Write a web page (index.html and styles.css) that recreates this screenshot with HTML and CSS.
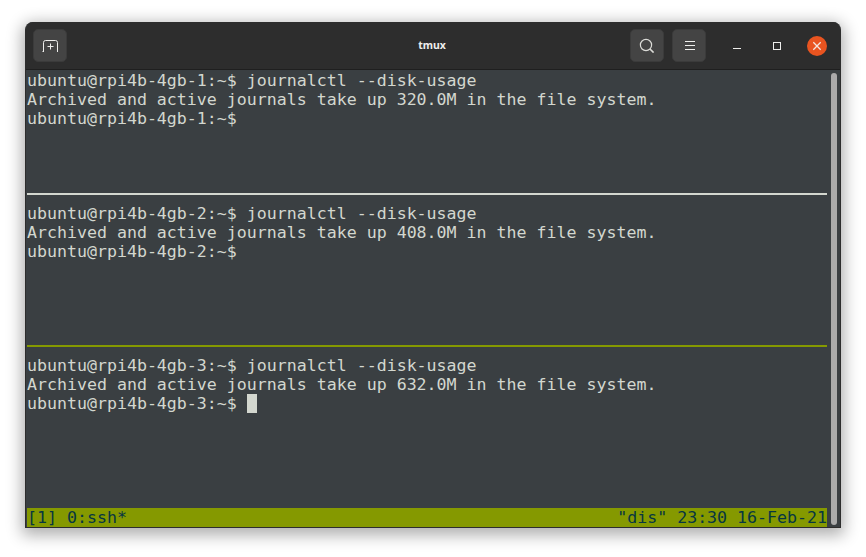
FILE: index.html
```html
<!DOCTYPE html>
<html lang="en">
<head>
<meta charset="utf-8">
<title>tmux</title>
<link rel="stylesheet" href="styles.css">
</head>
<body>
<div class="window">
  <header class="titlebar">
    <button class="tb-btn new-tab" aria-label="New tab">
      <svg width="16" height="15" viewBox="-1 -1 16 15" fill="none" stroke="#eeeeec" stroke-width="1"><path d="M0.5 13V3.5Q0.5 1.5 2.5 1.5H12.5Q14.5 1.5 14.5 3.5V13"/><path d="M-0.5 12.5H1M14 12.5H15"/><path d="M7.5 4.5V10.5M4.5 7.5H10.5"/></svg>
    </button>
    <div class="title">tmux</div>
    <div class="actions">
      <button class="tb-btn" aria-label="Search">
        <svg width="16" height="15" viewBox="0 0 16 15" fill="none" stroke="#dcdcd8" stroke-width="1.2"><circle cx="7" cy="7" r="5.6"/><path d="M11 11L14.6 14.6" stroke-width="1.6"/></svg>
      </button>
      <button class="tb-btn" aria-label="Menu">
        <svg width="12" height="11" viewBox="0 0 12 11" stroke="#eeeeec" stroke-width="1"><path d="M2 1.5H12M2 5.5H12M2 9.5H12"/></svg>
      </button>
      <div class="win-controls">
        <span class="wc wc-min"><svg width="10" height="10" viewBox="0 0 10 10" stroke="#eeeeec" stroke-width="1"><path d="M1 7.5H9"/></svg></span>
        <span class="wc wc-max"><svg width="10" height="10" viewBox="0 0 10 10" fill="none" stroke="#eeeeec" stroke-width="1"><rect x="1.5" y="1.5" width="7" height="7"/></svg></span>
        <span class="wc wc-close"><svg width="10" height="10" viewBox="0 0 10 10" stroke="#f5e6df" stroke-width="1.3"><path d="M1.3 1.3L8.7 8.7M8.7 1.3L1.3 8.7"/></svg></span>
      </div>
    </div>
  </header>
  <main class="terminal">
    <div class="screen">
      <section class="pane pane-6">
        <div class="line">ubuntu@rpi4b-4gb-1:~$ journalctl --disk-usage</div>
        <div class="line">Archived and active journals take up 320.0M in the file system.</div>
        <div class="line">ubuntu@rpi4b-4gb-1:~$</div>
      </section>
      <div class="divider"></div>
      <section class="pane pane-7">
        <div class="line">ubuntu@rpi4b-4gb-2:~$ journalctl --disk-usage</div>
        <div class="line">Archived and active journals take up 408.0M in the file system.</div>
        <div class="line">ubuntu@rpi4b-4gb-2:~$</div>
      </section>
      <div class="divider divider-active"></div>
      <section class="pane pane-8">
        <div class="line">ubuntu@rpi4b-4gb-3:~$ journalctl --disk-usage</div>
        <div class="line">Archived and active journals take up 632.0M in the file system.</div>
        <div class="line">ubuntu@rpi4b-4gb-3:~$ <span class="cursor"></span></div>
      </section>
      <footer class="status">
        <span>[1] 0:ssh*</span>
        <span>"dis" 23:30 16-Feb-21</span>
      </footer>
    </div>
    <div class="scrollbar"></div>
  </main>
</div>
</body>
</html>
```
FILE: styles.css
```css
* { box-sizing: border-box; }
html, body { margin: 0; height: 100%; background: #ffffff; overflow: hidden; }
body { padding: 22px 25px 0 25px; }

.window {
  width: 816px;
  height: 506px;
  border-radius: 8px 8px 0 0;
  overflow: hidden;
  display: flex;
  flex-direction: column;
  background: #3a3f42;
  border: 1px solid #2d2d2d;
  border-top: 0;
  box-shadow: 0 4px 16px 3px rgba(0, 0, 0, 0.32);
}

.titlebar {
  height: 48px;
  flex: none;
  display: flex;
  align-items: center;
  padding: 0 13px 0 7px;
  position: relative;
  background: #2d2d2d;
  border-bottom: 1px solid #1f1f1f;
}
.title {
  position: absolute;
  left: 0;
  right: 2px;
  top: 15px;
  text-align: center;
  font: 700 10.5px/16px "Noto Sans", "DejaVu Sans", sans-serif;
  color: #eeeeec;
  pointer-events: none;
}
.tb-btn {
  width: 34px;
  height: 33px;
  padding: 0;
  display: flex;
  align-items: center;
  justify-content: center;
  background: #444444;
  border: 1px solid #3b3b3b;
  border-radius: 5px;
}
.actions {
  margin-left: auto;
  display: flex;
  align-items: center;
  gap: 8px;
}
.win-controls {
  display: flex;
  align-items: center;
  gap: 20px;
  margin-left: 13px;
  padding-top: 1px;
}
.wc {
  width: 20px;
  height: 20px;
  display: flex;
  align-items: center;
  justify-content: center;
}
.wc-close { background: #e95420; border-radius: 50%; }

.terminal {
  flex: 1;
  display: flex;
  padding: 1px 0 0 1px;
  background: #3a3f42;
  min-height: 0;
}
.screen {
  width: 800px;
  flex: none;
  font: 16.6px/19px "DejaVu Sans Mono", monospace;
  color: #d3d7cf;
  display: flex;
  flex-direction: column;
}
.line { height: 19px; white-space: pre; }
.pane-6 { height: 114px; }
.pane-7 { height: 133px; }
.pane-8 { height: 152px; }
.divider { height: 19px; display: flex; align-items: flex-start; padding-top: 8px; }
.divider::before { content: ""; display: block; width: 100%; height: 2px; background: #d3d7cf; }
.divider-active::before { background: #859900; }
.cursor {
  display: inline-block;
  width: 10px;
  height: 19px;
  vertical-align: top;
  background: #d3d7cf;
}
.status {
  height: 19px;
  display: flex;
  justify-content: space-between;
  background: #859900;
  color: #073642;
  white-space: pre;
}
.scrollbar {
  width: 6px;
  height: 452px;
  margin: 2px 0 0 4px;
  background: #ababab;
  border-radius: 3px;
}
```
